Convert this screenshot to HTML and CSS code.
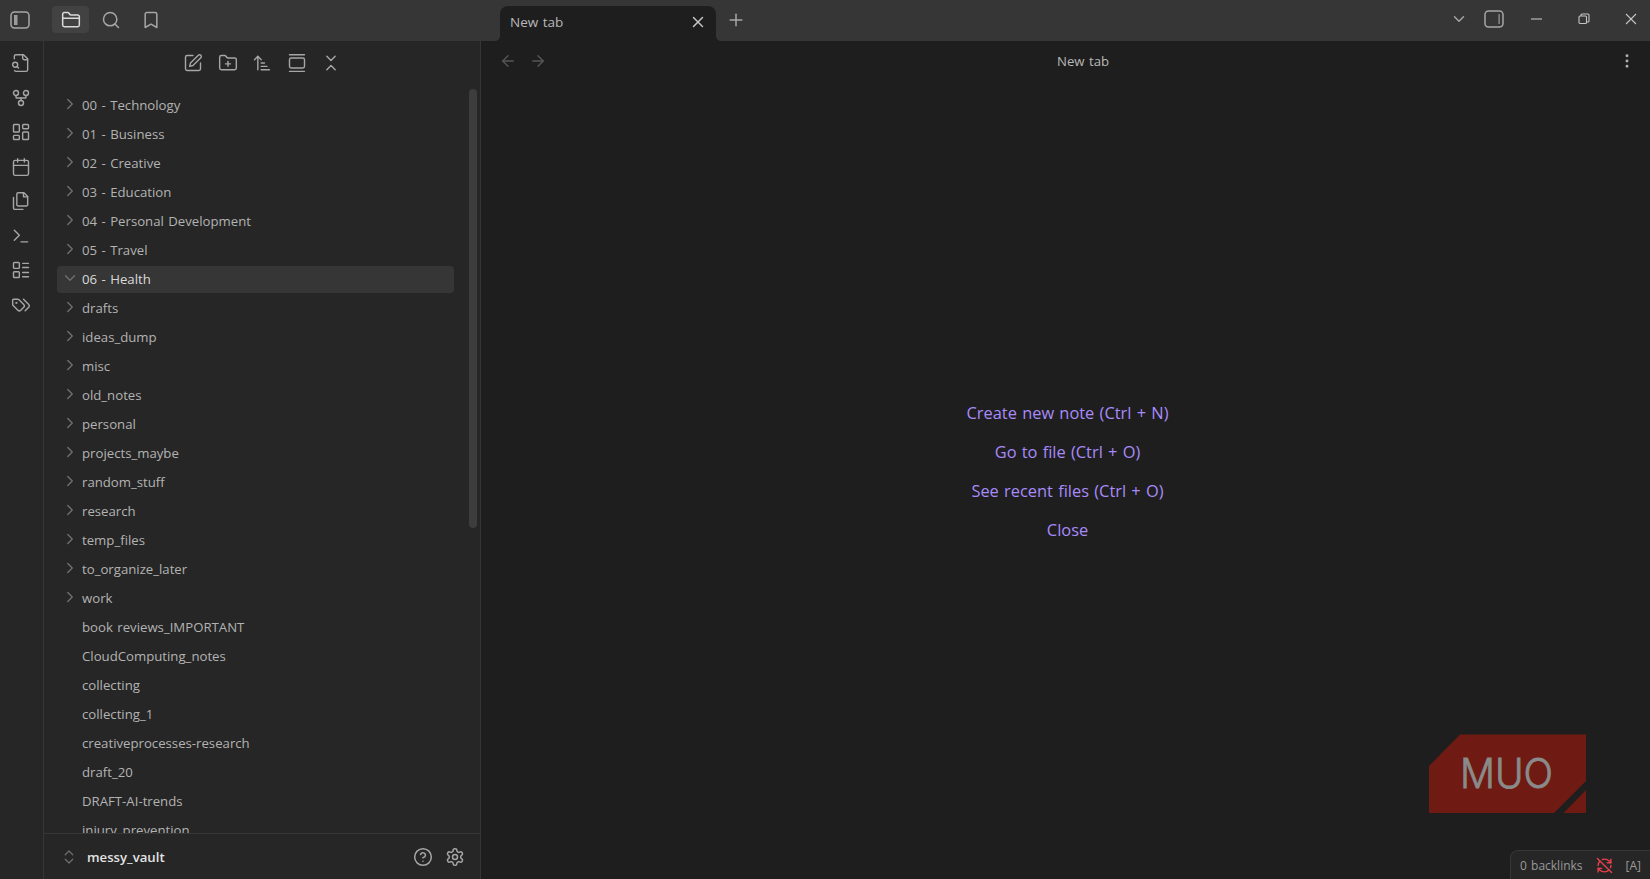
FILE: index.html
```html
<!DOCTYPE html>
<html lang="en">
<head>
<meta charset="utf-8">
<title>New tab - messy_vault</title>
<link rel="stylesheet" href="styles.css">
</head>
<body>
<svg class="defs" width="0" height="0" aria-hidden="true">
  <symbol id="i-folder" viewBox="0 0 24 24"><path d="M4 20h16a2 2 0 0 0 2-2V8a2 2 0 0 0-2-2h-7.93a2 2 0 0 1-1.66-.9l-.82-1.2A2 2 0 0 0 7.93 3H4a2 2 0 0 0-2 2v13c0 1.1.9 2 2 2Z"/><path d="M2 10h20"/></symbol>
  <symbol id="i-search" viewBox="0 0 24 24"><circle cx="11" cy="11" r="8"/><path d="m21 21-4.3-4.3"/></symbol>
  <symbol id="i-bookmark" viewBox="0 0 24 24"><path d="m19 21-7-4-7 4V5a2 2 0 0 1 2-2h10a2 2 0 0 1 2 2v16z"/></symbol>
  <symbol id="i-x" viewBox="0 0 24 24"><path d="M18 6 6 18"/><path d="m6 6 12 12"/></symbol>
  <symbol id="i-plus" viewBox="0 0 24 24"><path d="M5 12h14"/><path d="M12 5v14"/></symbol>
  <symbol id="i-down" viewBox="0 0 24 24"><path d="m6 9 6 6 6-6"/></symbol>
  <symbol id="i-right" viewBox="0 0 24 24"><path d="m9 18 6-6-6-6"/></symbol>
  <symbol id="i-file-search" viewBox="0 0 24 24"><path d="M14 2v4a2 2 0 0 0 2 2h4"/><path d="M4.268 21a2 2 0 0 0 1.727 1H18a2 2 0 0 0 2-2V7l-5-5H6a2 2 0 0 0-2 2v3"/><path d="m9 18-1.5-1.5"/><circle cx="5" cy="14" r="3"/></symbol>
  <symbol id="i-fork" viewBox="0 0 24 24"><circle cx="12" cy="18" r="3"/><circle cx="6" cy="6" r="3"/><circle cx="18" cy="6" r="3"/><path d="M18 9v2c0 .6-.4 1-1 1H7c-.6 0-1-.4-1-1V9"/><path d="M12 12v3"/></symbol>
  <symbol id="i-dash" viewBox="0 0 24 24"><rect x="3" y="3" width="7" height="9" rx="1"/><rect x="14" y="3" width="7" height="5" rx="1"/><rect x="14" y="12" width="7" height="9" rx="1"/><rect x="3" y="16" width="7" height="5" rx="1"/></symbol>
  <symbol id="i-calendar" viewBox="0 0 24 24"><path d="M8 2v4"/><path d="M16 2v4"/><rect x="3" y="4" width="18" height="18" rx="2"/><path d="M3 10h18"/></symbol>
  <symbol id="i-files" viewBox="0 0 24 24"><path d="M15.5 2H8.6c-.4 0-.8.2-1.1.5-.3.3-.5.7-.5 1.1v12.8c0 .4.2.8.5 1.1.3.3.7.5 1.1.5h9.8c.4 0 .8-.2 1.1-.5.3-.3.5-.7.5-1.1V6.5L15.5 2z"/><path d="M3 7.6v12.8c0 .4.2.8.5 1.1.3.3.7.5 1.1.5h9.8"/><path d="M15 2v5h5"/></symbol>
  <symbol id="i-terminal" viewBox="0 0 24 24"><path d="m4 17 6-6-6-6"/><path d="M12 19h8"/></symbol>
  <symbol id="i-list" viewBox="0 0 24 24"><rect x="3" y="3" width="7" height="7" rx="1"/><rect x="3" y="14" width="7" height="7" rx="1"/><path d="M14 4h7"/><path d="M14 9h7"/><path d="M14 15h7"/><path d="M14 20h7"/></symbol>
  <symbol id="i-tags" viewBox="0 0 24 24"><path d="m15 5 6.3 6.3a2.4 2.4 0 0 1 0 3.4L17 19"/><path d="M9.586 5.586A2 2 0 0 0 8.172 5H3a1 1 0 0 0-1 1v5.172a2 2 0 0 0 .586 1.414L8.29 18.29a2.426 2.426 0 0 0 3.42 0l3.58-3.58a2.426 2.426 0 0 0 0-3.42z"/><circle cx="6.5" cy="9.5" r=".5"/></symbol>
  <symbol id="i-edit" viewBox="0 0 24 24"><path d="M12 3H5a2 2 0 0 0-2 2v14a2 2 0 0 0 2 2h14a2 2 0 0 0 2-2v-7"/><path d="M18.375 2.625a2.121 2.121 0 1 1 3 3L12 15l-4 1 1-4Z"/></symbol>
  <symbol id="i-folder-plus" viewBox="0 0 24 24"><path d="M12 10v6"/><path d="M9 13h6"/><path d="M20 20a2 2 0 0 0 2-2V8a2 2 0 0 0-2-2h-7.9a2 2 0 0 1-1.69-.9L9.6 3.9A2 2 0 0 0 7.93 3H4a2 2 0 0 0-2 2v13a2 2 0 0 0 2 2Z"/></symbol>
  <symbol id="i-sort" viewBox="0 0 24 24"><path d="m3 8 4-4 4 4"/><path d="M7 4v16"/><path d="M11 12h4"/><path d="M11 16h7"/><path d="M11 20h10"/></symbol>
  <symbol id="i-gallery" viewBox="0 0 24 24"><path d="M3 2h18"/><rect x="3" y="6" width="18" height="12" rx="2"/><path d="M3 22h18"/></symbol>
  <symbol id="i-collapse" viewBox="0 0 24 24"><path d="m7 20 5-5 5 5"/><path d="m7 4 5 5 5-5"/></symbol>
  <symbol id="i-updown" viewBox="0 0 24 24"><path d="m7 15 5 5 5-5"/><path d="m7 9 5-5 5 5"/></symbol>
  <symbol id="i-help" viewBox="0 0 24 24"><circle cx="12" cy="12" r="10"/><path d="M9.09 9a3 3 0 0 1 5.83 1c0 2-3 3-3 3"/><path d="M12 17h.01"/></symbol>
  <symbol id="i-gear" viewBox="0 0 24 24"><path d="M12.22 2h-.44a2 2 0 0 0-2 2v.18a2 2 0 0 1-1 1.73l-.43.25a2 2 0 0 1-2 0l-.15-.08a2 2 0 0 0-2.73.73l-.22.38a2 2 0 0 0 .73 2.73l.15.1a2 2 0 0 1 1 1.72v.51a2 2 0 0 1-1 1.74l-.15.09a2 2 0 0 0-.73 2.73l.22.38a2 2 0 0 0 2.73.73l.15-.08a2 2 0 0 1 2 0l.43.25a2 2 0 0 1 1 1.73V20a2 2 0 0 0 2 2h.44a2 2 0 0 0 2-2v-.18a2 2 0 0 1 1-1.73l.43-.25a2 2 0 0 1 2 0l.15.08a2 2 0 0 0 2.73-.73l.22-.39a2 2 0 0 0-.73-2.73l-.15-.08a2 2 0 0 1-1-1.74v-.5a2 2 0 0 1 1-1.74l.15-.09a2 2 0 0 0 .73-2.73l-.22-.38a2 2 0 0 0-2.73-.73l-.15.08a2 2 0 0 1-2 0l-.43-.25a2 2 0 0 1-1-1.73V4a2 2 0 0 0-2-2z"/><circle cx="12" cy="12" r="3"/></symbol>
  <symbol id="i-back" viewBox="0 0 24 24"><path d="m12 19-7-7 7-7"/><path d="M19 12H5"/></symbol>
  <symbol id="i-forward" viewBox="0 0 24 24"><path d="M5 12h14"/><path d="m12 5 7 7-7 7"/></symbol>
  <symbol id="i-sync-off" viewBox="0 0 24 24"><path d="M21 8 18.74 5.740A9.75 9.75 0 0 0 12 3c-1 0-1.97.16-2.87.47"/><path d="M8 16H3v5"/><path d="M3 12c0-2.49 1-4.74 2.64-6.36"/><path d="m3 16 2.26 2.26A9.75 9.75 0 0 0 12 21c2.49 0 4.74-1 6.36-2.64"/><path d="M21 12c0 1-.16 1.97-.47 2.87"/><path d="M21 3v5h-5"/><path d="M22 22 2 2"/></symbol>
</svg>

<div class="app">
  <header class="titlebar">
    <div class="tb-left">
      <button class="icon-btn toggle-btn" aria-label="Toggle left sidebar">
        <svg class="panel-icon" viewBox="0 0 20 18"><rect x="1" y="1" width="18" height="16" rx="3.5"/><rect class="fill" x="4" y="4" width="3.5" height="10"/></svg>
      </button>
      <div class="tb-tabs">
        <button class="icon-btn tb-tab is-active"><svg class="ic ic-20"><use href="#i-folder"/></svg></button>
        <button class="icon-btn tb-tab"><svg class="ic ic-20"><use href="#i-search"/></svg></button>
        <button class="icon-btn tb-tab"><svg class="ic ic-20"><use href="#i-bookmark"/></svg></button>
      </div>
    </div>
    <div class="tabstrip">
      <div class="tab">
        <span class="tab-title">New tab</span>
        <svg class="ic ic-18 tab-close"><use href="#i-x"/></svg>
      </div>
      <svg class="ic ic-20 tab-new"><use href="#i-plus"/></svg>
    </div>
    <div class="tb-right">
      <svg class="ic ic-18 tb-list"><use href="#i-down"/></svg>
      <svg class="panel-icon panel-right" viewBox="0 0 20 18"><rect x="1" y="1" width="18" height="16" rx="3.5"/><rect class="fill" x="14.5" y="4" width="1.2" height="10"/></svg>
      <div class="win-controls">
        <svg class="win-icon" viewBox="0 0 12 12"><path d="M0 6h11"/></svg>
        <svg class="win-icon" viewBox="0 0 12 12"><rect x="1" y="3" width="7.5" height="7.5" rx="1"/><path d="M3 3V2a1 1 0 0 1 1-1h6a1 1 0 0 1 1 1v6a1 1 0 0 1-1 1H8.500"/></svg>
        <svg class="win-icon" viewBox="0 0 12 12"><path d="M1 1l10 10"/><path d="M11 1 1 11"/></svg>
      </div>
    </div>
  </header>

  <div class="workspace">
    <nav class="ribbon">
      <svg class="ic ic-tool"><use href="#i-file-search"/></svg>
      <svg class="ic ic-tool"><use href="#i-fork"/></svg>
      <svg class="ic ic-tool"><use href="#i-dash"/></svg>
      <svg class="ic ic-tool"><use href="#i-calendar"/></svg>
      <svg class="ic ic-tool"><use href="#i-files"/></svg>
      <svg class="ic ic-tool"><use href="#i-terminal"/></svg>
      <svg class="ic ic-tool"><use href="#i-list"/></svg>
      <svg class="ic ic-tool"><use href="#i-tags"/></svg>
    </nav>

    <aside class="sidebar">
      <div class="nav-header">
        <svg class="ic ic-tool"><use href="#i-edit"/></svg>
        <svg class="ic ic-tool"><use href="#i-folder-plus"/></svg>
        <svg class="ic ic-tool"><use href="#i-sort"/></svg>
        <svg class="ic ic-tool"><use href="#i-gallery"/></svg>
        <svg class="ic ic-tool"><use href="#i-collapse"/></svg>
      </div>
      <div class="tree">
        <div class="row"><svg class="ic chev"><use href="#i-right"/></svg><span>00 - Technology</span></div>
        <div class="row"><svg class="ic chev"><use href="#i-right"/></svg><span>01 - Business</span></div>
        <div class="row"><svg class="ic chev"><use href="#i-right"/></svg><span>02 - Creative</span></div>
        <div class="row"><svg class="ic chev"><use href="#i-right"/></svg><span>03 - Education</span></div>
        <div class="row"><svg class="ic chev"><use href="#i-right"/></svg><span>04 - Personal Development</span></div>
        <div class="row"><svg class="ic chev"><use href="#i-right"/></svg><span>05 - Travel</span></div>
        <div class="row is-open"><svg class="ic chev"><use href="#i-down"/></svg><span>06 - Health</span></div>
        <div class="row"><svg class="ic chev"><use href="#i-right"/></svg><span>drafts</span></div>
        <div class="row"><svg class="ic chev"><use href="#i-right"/></svg><span>ideas_dump</span></div>
        <div class="row"><svg class="ic chev"><use href="#i-right"/></svg><span>misc</span></div>
        <div class="row"><svg class="ic chev"><use href="#i-right"/></svg><span>old_notes</span></div>
        <div class="row"><svg class="ic chev"><use href="#i-right"/></svg><span>personal</span></div>
        <div class="row"><svg class="ic chev"><use href="#i-right"/></svg><span>projects_maybe</span></div>
        <div class="row"><svg class="ic chev"><use href="#i-right"/></svg><span>random_stuff</span></div>
        <div class="row"><svg class="ic chev"><use href="#i-right"/></svg><span>research</span></div>
        <div class="row"><svg class="ic chev"><use href="#i-right"/></svg><span>temp_files</span></div>
        <div class="row"><svg class="ic chev"><use href="#i-right"/></svg><span>to_organize_later</span></div>
        <div class="row"><svg class="ic chev"><use href="#i-right"/></svg><span>work</span></div>
        <div class="row file"><span>book reviews_IMPORTANT</span></div>
        <div class="row file"><span>CloudComputing_notes</span></div>
        <div class="row file"><span>collecting</span></div>
        <div class="row file"><span>collecting_1</span></div>
        <div class="row file"><span>creativeprocesses-research</span></div>
        <div class="row file"><span>draft_20</span></div>
        <div class="row file"><span>DRAFT-AI-trends</span></div>
        <div class="row file"><span>injury_prevention</span></div>
        <div class="scroll-thumb"></div>
      </div>
      <footer class="vault-bar">
        <svg class="ic vault-chev"><use href="#i-updown"/></svg>
        <span class="vault-name">messy_vault</span>
        <svg class="ic ic-20 vault-help"><use href="#i-help"/></svg>
        <svg class="ic ic-20"><use href="#i-gear"/></svg>
      </footer>
    </aside>

    <main class="main">
      <div class="view-header">
        <div class="view-nav">
          <svg class="ic ic-18"><use href="#i-back"/></svg>
          <svg class="ic ic-18"><use href="#i-forward"/></svg>
        </div>
        <div class="view-title">New tab</div>
        <svg class="ic ic-18 view-more" viewBox="0 0 24 24"><circle cx="12" cy="5" r="1"/><circle cx="12" cy="12" r="1"/><circle cx="12" cy="19" r="1"/></svg>
      </div>
      <div class="empty">
        <a class="empty-action">Create new note (Ctrl + N)</a>
        <a class="empty-action">Go to file (Ctrl + O)</a>
        <a class="empty-action">See recent files (Ctrl + O)</a>
        <a class="empty-action">Close</a>
      </div>
      <svg class="muo" viewBox="0 0 158 80" aria-label="MUO logo">
        <polygon class="muo-bg" points="31,0.500 157,0.500 157,47 125,79 0,79 0,32"/>
        <polygon class="muo-bg" points="157,56 157,79 134.500,79"/>
        <text class="muo-text" x="31" y="54" textLength="93" lengthAdjust="spacingAndGlyphs">MUO</text>
      </svg>
      <div class="status">
        <span>0 backlinks</span>
        <svg class="ic sync-off"><use href="#i-sync-off"/></svg>
        <span>[A]</span>
      </div>
    </main>
  </div>
</div>
</body>
</html>
```
FILE: styles.css
```css
* { box-sizing: border-box; }
html, body { margin: 0; height: 100%; }
body {
  background: #1e1e1e;
  color: #b3b3b3;
  font-family: "Open Sans", "Noto Sans", "Liberation Sans", sans-serif;
  font-size: 13.2px;
  word-spacing: 1px;
  overflow: hidden;
}
.defs { position: absolute; }
.app { display: flex; flex-direction: column; height: 100vh; }

.ic {
  display: block;
  flex: none;
  fill: none;
  stroke: #a6a6a6;
  stroke-width: 2;
  stroke-linecap: round;
  stroke-linejoin: round;
  width: 18px;
  height: 18px;
}
.ic-18 { width: 18px; height: 18px; stroke-width: 1.9; }
.ic-20 { width: 20px; height: 20px; stroke-width: 1.8; }
.ic-tool { width: 20px; height: 20px; stroke-width: 1.7; }

/* Title bar */
.titlebar { display: flex; height: 41px; flex: none; background: #363636; }
.tb-left { display: flex; align-items: flex-start; width: 500px; flex: none; padding: 6px 0 0 6px; }
.icon-btn { display: flex; align-items: center; justify-content: center; background: none; border: 0; padding: 0; height: 27px; border-radius: 4px; }
.toggle-btn { width: 28px; margin-right: 18px; }
.tb-tabs { display: flex; gap: 3px; }
.tb-tab { width: 37px; }
.tb-tab.is-active { background: #424242; }
.tb-tab.is-active .ic { stroke: #dadada; }
.panel-icon { width: 20px; height: 18px; fill: none; display: block; flex: none; }
.panel-icon rect { fill: none; stroke: #a6a6a6; stroke-width: 1.5; }
.panel-icon rect.fill { fill: #9a9a9a; stroke: none; }

.tabstrip { display: flex; align-items: flex-start; flex: 1; }
.tab {
  position: relative;
  display: flex;
  align-items: center;
  justify-content: space-between;
  width: 216px;
  height: 35px;
  margin-top: 6px;
  padding: 0 9px 3px 10px;
  background: #1e1e1e;
  border-radius: 8px 8px 0 0;
  color: #b8b8b8;
  font-size: 13.5px;
}
.tab::before, .tab::after {
  content: "";
  position: absolute;
  bottom: 0;
  width: 5px;
  height: 5px;
}
.tab::before { left: -5px; background: radial-gradient(circle at 0 0, #363636 4.6px, #1e1e1e 5.2px); }
.tab::after { right: -5px; background: radial-gradient(circle at 100% 0, #363636 4.6px, #1e1e1e 5.2px); }
.tab-close { stroke: #c8c8c8; }
.tab-new { margin: 10px 0 0 10px; stroke: #a6a6a6; }

.tb-right { display: flex; align-items: center; height: 38px; }
.tb-list { stroke: #a6a6a6; margin-right: 16px; }
.panel-right { margin-right: 27px; }
.win-controls { display: flex; align-items: center; gap: 35px; padding-right: 13px; }
.win-icon { width: 12px; height: 12px; display: block; fill: none; stroke: #c4c4c4; stroke-width: 1.1; }
.win-icon rect { fill: none; }

/* Body */
.workspace { display: flex; flex: 1; min-height: 0; }
.ribbon {
  display: flex;
  flex-direction: column;
  align-items: center;
  gap: 14.5px;
  width: 44px;
  flex: none;
  padding: 12px 5px 0 4px;
  background: #262626;
  border-right: 1px solid #363636;
}

.sidebar {
  display: flex;
  flex-direction: column;
  width: 437px;
  flex: none;
  background: #262626;
  border-right: 1px solid #363636;
}
.nav-header { display: flex; justify-content: center; gap: 14.5px; height: 48px; padding-top: 12px; flex: none; }
.tree { position: relative; flex: 1; min-height: 0; overflow: hidden; padding: 2px 0 0 13px; }
.row { display: flex; align-items: center; width: 397px; height: 29px; padding-bottom: 2px; border-radius: 4px; }
.row .chev { width: 18px; height: 18px; margin: 0 3px 2px 4px; stroke: #6f6f6f; stroke-width: 1.8; }
.row.file { padding-left: 25px; }
.row.is-open { height: 27px; margin: 1px 0; background: #363636; color: #dadada; }
.scroll-thumb { position: absolute; left: 425px; top: 0; width: 8px; height: 439px; border-radius: 4px; background: #3d3d3d; }

.vault-bar { display: flex; align-items: center; height: 46px; flex: none; padding: 0 15px 0 16px; border-top: 1px solid #363636; }
.vault-chev { width: 18px; height: 18px; stroke: #6f6f6f; stroke-width: 1.6; margin-right: 9px; }
.vault-name { flex: 1; font-weight: 600; color: #e2e2e2; }
.vault-help { margin-right: 12px; }

/* Main */
.main { position: relative; display: flex; flex-direction: column; flex: 1; min-width: 0; background: #1e1e1e; }
.view-header { display: flex; align-items: center; height: 39px; padding: 0 14px 0 18px; flex: none; }
.view-nav { display: flex; gap: 12px; width: 52px; }
.view-nav .ic { stroke: #555; }
.view-title { flex: 1; text-align: center; color: #b8b8b8; padding-right: 3px; }
.view-more { stroke: #b0b0b0; fill: #b0b0b0; }
.empty { flex: 1; display: flex; flex-direction: column; align-items: center; justify-content: center; gap: 15px; padding: 0 0 17px 4px; }
.empty-action { color: #a88bfa; font-size: 16.4px; line-height: 24px; }
.muo { position: absolute; right: 63px; bottom: 65px; width: 158px; height: 80px; }
.muo-bg { fill: #6f1a12; }
.muo-text { fill: #8a8a8a; stroke: #8a8a8a; stroke-width: 0.8; font-family: Inter, "Open Sans", sans-serif; font-weight: 300; font-size: 41px; word-spacing: 0; }
.status {
  position: absolute;
  right: 0;
  bottom: 0;
  display: flex;
  align-items: center;
  gap: 13px;
  height: 29px;
  padding: 0 9px;
  background: #262626;
  border: 1px solid #363636;
  border-width: 1px 0 0 1px;
  border-top-left-radius: 8px;
  font-size: 12px;
  color: #9a9a9a;
}
.sync-off { width: 17px; height: 17px; stroke: #e5414c; }
```
